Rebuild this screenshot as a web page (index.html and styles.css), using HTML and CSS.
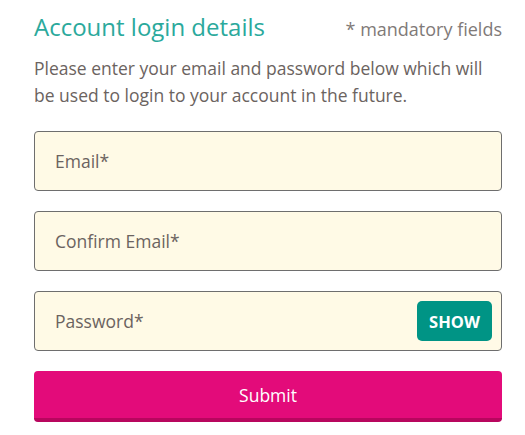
FILE: index.html
```html
<!DOCTYPE html>
<html>
<head>
<meta charset="utf-8">
<link rel="stylesheet" href="styles.css">
</head>
<body>
<div class="form">
  <div class="header">
    <h2 class="title">Account login details</h2>
    <span class="mandatory">* mandatory fields</span>
  </div>
  <p class="intro">Please enter your email and password below which will be used to login to your account in the future.</p>
  <div class="field"><span class="label">Email*</span></div>
  <div class="field"><span class="label">Confirm Email*</span></div>
  <div class="field"><span class="label">Password*</span><button class="show">SHOW</button></div>
  <button class="submit">Submit</button>
</div>
</body>
</html>
```
FILE: styles.css
```css
html, body {
  margin: 0;
  padding: 0;
  background: #ffffff;
}
body {
  font-family: "Open Sans", "Liberation Sans", sans-serif;
}
.form {
  width: 468px;
  margin-left: 34px;
  padding-top: 11px;
  display: flex;
  flex-direction: column;
}
.header {
  display: flex;
  justify-content: space-between;
  align-items: baseline;
  height: 32px;
}
.title {
  margin: 0;
  font-size: 24px;
  font-weight: 400;
  color: #2ba99c;
  line-height: 32px;
}
.mandatory {
  font-size: 18px;
  color: #7f7a78;
}
.intro {
  margin: 12px 0 22px 0;
  font-size: 17.5px;
  line-height: 27px;
  color: #6b6360;
}
.field {
  box-sizing: border-box;
  height: 60px;
  border: 1px solid #6e6e6e;
  border-radius: 4px;
  background: #fffae6;
  display: flex;
  align-items: center;
  justify-content: space-between;
  padding: 0 9px 0 20px;
  margin-bottom: 20px;
}
.label {
  font-size: 17.5px;
  color: #6b6360;
}
.show {
  border: none;
  border-radius: 5px;
  background: #009485;
  color: #ffffff;
  font-family: "Open Sans", "Liberation Sans", sans-serif;
  font-weight: 700;
  font-size: 16.5px;
  width: 75px;
  height: 40px;
  padding: 0;
}
.submit {
  box-sizing: border-box;
  height: 51px;
  border: none;
  border-bottom: 4px solid #b8065e;
  border-radius: 4px;
  background: #e30b7a;
  color: #ffffff;
  font-family: "Open Sans", "Liberation Sans", sans-serif;
  font-size: 17.5px;
  padding: 0;
}
```
